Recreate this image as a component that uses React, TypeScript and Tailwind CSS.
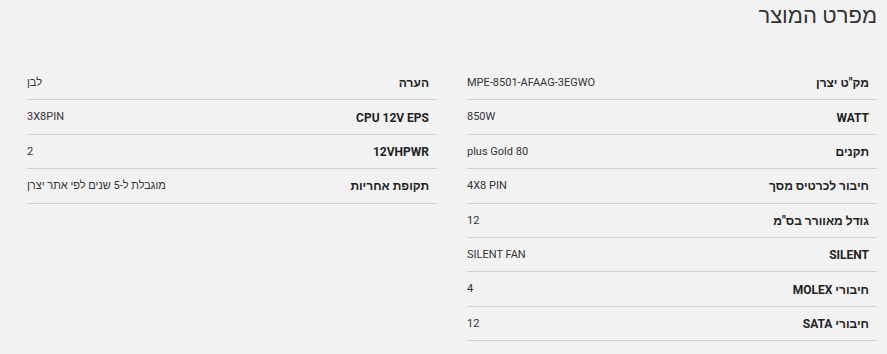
import React from 'react';

type Spec = { label: string; value: string };

const rightSpecs: Spec[] = [
  { label: 'מק"ט יצרן', value: 'MPE-8501-AFAAG-3EGWO' },
  { label: 'WATT', value: '850W' },
  { label: 'תקנים', value: '80 plus Gold' },
  { label: 'חיבור לכרטיס מסך', value: '4X8 PIN' },
  { label: 'גודל מאוורר בס"מ', value: '12' },
  { label: 'SILENT', value: 'SILENT FAN' },
  { label: 'חיבורי MOLEX', value: '4' },
  { label: 'חיבורי SATA', value: '12' },
];

const leftSpecs: Spec[] = [
  { label: 'הערה', value: 'לבן' },
  { label: 'CPU 12V EPS', value: '3X8PIN' },
  { label: '12VHPWR', value: '2' },
  { label: 'תקופת אחריות', value: 'מוגבלת ל-5 שנים לפי אתר יצרן' },
];

const SpecRow = ({ label, value }: Spec) => (
  <div className="flex h-[34.4px] items-center justify-between border-b border-[#d3d3d3] pt-[1px]">
    <span className="pr-2 text-[12px] font-bold text-[#222]">{label}</span>
    <span className="text-[11px] text-[#333]">{value}</span>
  </div>
);

export default function App() {
  return (
    <div
      dir="rtl"
      className="min-h-[354px] bg-[#f2f2f2] pl-[27px] pr-[10px] font-['Roboto','Liberation_Sans',sans-serif]"
    >
      <h2 className="pt-[3px] text-[22px] leading-[26px] text-[#333]">מפרט המוצר</h2>
      <div className="mt-[37px] grid grid-cols-2 gap-x-[30px] items-start">
        <div className="flex flex-col">
          {rightSpecs.map((s) => (
            <SpecRow key={s.label} {...s} />
          ))}
        </div>
        <div className="flex flex-col">
          {leftSpecs.map((s) => (
            <SpecRow key={s.label} {...s} />
          ))}
        </div>
      </div>
    </div>
  );
}
